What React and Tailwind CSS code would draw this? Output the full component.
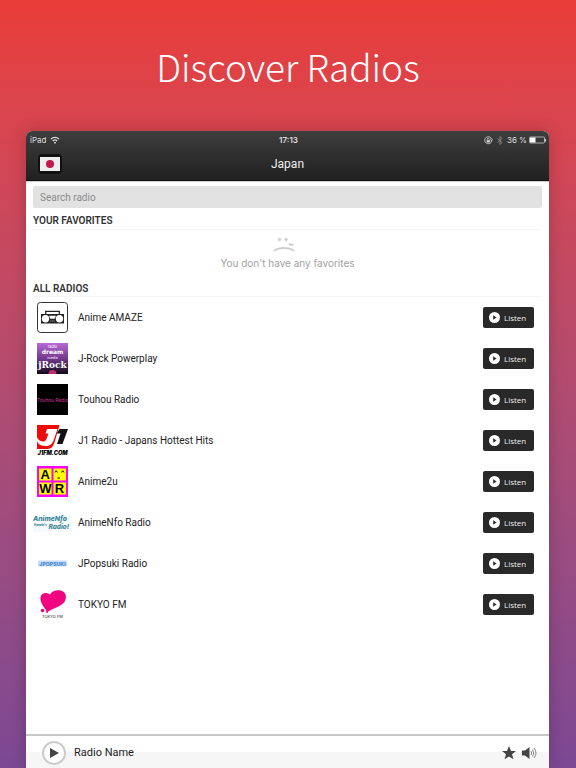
import React from "react";

function Boombox() {
  return (
    <svg viewBox="0 0 31 31" className="size-[31px]" aria-hidden="true">
      <rect x=".5" y=".5" width="30" height="30" rx="3" fill="#fff" stroke="#333" />
      <path d="M8.700 12.500V9.300h13.600v3.200" fill="none" stroke="#222" strokeWidth="1.300" />
      <path d="M4 12h23v9.500H4z" fill="#222" />
      <circle cx="8.500" cy="16.700" r="3.700" fill="#fff" />
      <circle cx="22.500" cy="16.700" r="3.700" fill="#fff" />
      <path d="M12 13.700h7l-1.300 3h-4.400z" fill="#fff" />
      <path d="M13 19h5" stroke="#777" />
    </svg>
  );
}

function JRock() {
  return (
    <svg viewBox="0 0 31 31" className="size-[31px]" aria-hidden="true">
      <defs>
        <linearGradient id="jrock" x2="0" y2="1">
          <stop offset="0" stopColor="#b768d6" />
          <stop offset=".5" stopColor="#74398e" />
          <stop offset="1" stopColor="#120a18" />
        </linearGradient>
      </defs>
      <rect width="31" height="31" fill="url(#jrock)" />
      <g textAnchor="middle" fill="#fff" fontFamily="Inter, sans-serif">
        <text x="15.5" y="4.500" fontSize="4">radio</text>
        <text x="15.5" y="10.500" fontSize="6" fontWeight="800" fontFamily="DejaVu Sans, sans-serif">dream</text>
        <text x="15.5" y="15.500" fontSize="3.600">media</text>
        <text x="15.5" y="25" fontSize="9" fontWeight="700" fontFamily="DejaVu Serif, serif">jRock</text>
      </g>
      <path d="M11.5 31a4 4 0 0 1 8 0z" fill="#c22b73" />
    </svg>
  );
}

function Touhou() {
  return (
    <svg viewBox="0 0 31 31" className="size-[31px]" aria-hidden="true">
      <rect width="31" height="31" fill="#000" />
      <text x="15.5" y="17.500" textAnchor="middle" fontSize="4.800" fill="#d83a9b" fontFamily="Inter, sans-serif">Touhou Radio</text>
    </svg>
  );
}

function J1() {
  return (
    <svg viewBox="0 0 31 31" className="size-[31px]" aria-hidden="true">
      <path d="M0 0h22.500l-5 17.500c-1.500 4.500-3.500 6.500-8 6.500H0z" fill="#f00b0b" />
      <path d="M10 4h10.500l-4 11.500c-1.500 4-4 5.500-8 5.500-4 0-7-1.500-8.500-4.500v-4c2 3 4 4 6 4 1.700 0 2.700-.8 3.300-2.300L11.500 8.500H8.500z" fill="#fff" />
      <path d="M22.500 4H31l-5.500 15h-5.500l3.500-10.500H19.500z" fill="#111" />
      <text x="15.5" y="30" textAnchor="middle" fontSize="5.600" fontWeight="900" fontStyle="italic" fontFamily="Inter, sans-serif">J1FM.COM</text>
    </svg>
  );
}

function Awr() {
  return (
    <svg viewBox="0 0 31 31" className="size-[31px]" aria-hidden="true">
      <rect width="31" height="31" fill="#f0f" />
      <path d="M2 2.500h12.500v12H2zM16.500 2.500H29v12H16.500zM2 16.500h12.500v12H2zM16.500 16.500H29v12H16.500z" fill="#ff0" />
      <g textAnchor="middle" fontSize="13" fontWeight="700" fontFamily="Liberation Sans, sans-serif">
        <text x="8.300" y="13">A</text>
        <text x="8.300" y="27">W</text>
        <text x="22.500" y="27">R</text>
      </g>
      <path d="M18 6.500l1.200-1.800 1.200 1.800M24.500 6.500l1.200-1.800L27 6.500M20.500 12h2.500" fill="none" stroke="#111" />
    </svg>
  );
}

function AnimeNfo() {
  return (
    <svg viewBox="0 0 39 18" className="h-[18px] w-[39px]" aria-hidden="true">
      <rect width="39" height="18" fill="#f7fafb" />
      <g fill="#3b8799" fontWeight="800" fontStyle="italic" fontFamily="Inter, sans-serif">
        <text x="0" y="7" fontSize="7">AnimeNfo</text>
        <text x="16" y="15.500" fontSize="6.600">Radio!</text>
        <text x="1" y="12" fontSize="3">Hanabi's</text>
      </g>
    </svg>
  );
}

function JPopsuki() {
  return (
    <svg viewBox="0 0 29 7" className="h-[7px] w-[29px]" aria-hidden="true">
      <rect y=".5" width="29" height="6" rx="1" fill="#c3dcf7" />
      <text x="14.500" y="5.500" textAnchor="middle" fontSize="5.200" fontWeight="800" fill="#4a86d6" fontFamily="Inter, sans-serif">JPOPSUKI</text>
    </svg>
  );
}

function TokyoFm() {
  return (
    <svg viewBox="0 0 31 31" className="size-[31px]" aria-hidden="true">
      <path d="M10.500 23C8 20 2.500 13 3.500 8c1-4 6-5.500 9.500-2.500C15.500 1 22 .2 26 2.500c4 2.500 3.500 8 1 11-4 4.500-11 5.500-16.500 9.500z" fill="#f0047f" />
      <circle cx="5.500" cy="21.500" r="1.800" fill="#f0047f" />
      <circle cx="10" cy="23" r="1" fill="#f0047f" />
      <text x="15.500" y="29" textAnchor="middle" fontSize="4" fill="#222" fontFamily="Inter, sans-serif">TOKYO FM</text>
    </svg>
  );
}

const radios = [
  ["Anime AMAZE", Boombox],
  ["J-Rock Powerplay", JRock],
  ["Touhou Radio", Touhou],
  ["J1 Radio - Japans Hottest Hits", J1],
  ["Anime2u", Awr],
  ["AnimeNfo Radio", AnimeNfo],
  ["JPopsuki Radio", JPopsuki],
  ["TOKYO FM", TokyoFm],
];

function StatusBar() {
  return (
    <div className="grid grid-cols-3 items-center pt-[3px] pr-0.5 pl-1 font-['Inter',sans-serif] text-[8px] leading-[12px] text-[#dedede]">
      <div className="flex items-center gap-1">
        <span>iPad</span>
        <svg viewBox="0 0 10 8" className="h-2 w-[10px]" aria-hidden="true">
          <path d="M1 3a5.800 5.800 0 0 1 8 0M2.800 5a3.200 3.200 0 0 1 4.400 0" fill="none" stroke="#ddd" strokeWidth="1.200" />
          <circle cx="5" cy="6.700" r=".9" fill="#ddd" />
        </svg>
      </div>
      <span className="text-center font-semibold">17:13</span>
      <div className="flex items-center justify-end gap-1">
        <svg viewBox="0 0 9 9" className="size-[9px]" fill="none" stroke="#ddd" aria-hidden="true">
          <path d="M7.700 5A3.500 3.500 0 1 1 7.700 3.500M6.300 3.700l1.500 1 1-1.500" strokeWidth=".8" />
          <path d="M3.300 4.300V3.200a1 1 0 0 1 2 0v1.100" strokeWidth=".7" />
          <rect x="2.700" y="4.200" width="3.200" height="2.200" fill="#ddd" stroke="none" />
        </svg>
        <svg viewBox="0 0 6 9" className="h-[9px] w-[6px]" fill="none" stroke="#888" strokeWidth=".9" aria-hidden="true">
          <path d="M.5 2.500l4.500 4-2 2V.500l2 2-4.500 4" />
        </svg>
        <span>36 %</span>
        <svg viewBox="0 0 18 8" className="-ml-0.5 h-2 w-[18px]" aria-hidden="true">
          <rect x=".5" y="1" width="15" height="6" rx=".8" fill="none" stroke="#bbb" strokeWidth=".9" />
          <rect x="1" y="1.500" width="5.500" height="5" fill="#fff" />
          <path d="M16.500 3v2.500" stroke="#ddd" />
        </svg>
      </div>
    </div>
  );
}

export default function App() {
  return (
    <div className="flex min-h-screen flex-col bg-linear-to-b from-[#ea3d38] to-[#7c4894] font-['Roboto',sans-serif]">
      <h1 className="pt-9 pb-[35px] text-center font-['Noto_Sans_CJK_SC',sans-serif] text-[37px] leading-[60px] font-light text-white">
        Discover Radios
      </h1>
      <main className="mr-[27px] ml-[26px] flex flex-1 flex-col overflow-hidden rounded-t-md bg-white shadow-[0_0_16px_rgba(0,0,0,0.2)]">
        <header className="h-[50px] border-b border-[#111] bg-linear-to-b from-[#3e3e3e] to-[#212121]">
          <StatusBar />
          <div className="grid grid-cols-3 items-center px-3 pt-2">
            <button aria-label="Country: Japan" className="flex h-5 w-6 items-center justify-center rounded-sm bg-[#111]">
              <svg viewBox="0 0 20 14" className="h-[14px] w-5" aria-hidden="true">
                <rect width="20" height="14" fill="#eee" />
                <circle cx="10" cy="7" r="4" fill="#c3194b" />
              </svg>
            </button>
            <h2 className="text-center text-xs text-[#eee]">Japan</h2>
          </div>
        </header>
        <div className="flex-1 border-t border-[#ccc] px-[7px] pt-1">
          <input aria-label="Search radio" placeholder="Search radio" className="block h-[22px] w-full rounded-xs bg-[#e2e2e2] px-[7px] text-[10px] text-[#555] placeholder:text-[#8b8b8b]" />
          <section>
            <h3 className="border-b border-[#f5f5f5] pt-[7px] pb-0.5 text-[10px] leading-[12px] font-semibold text-[#333]">YOUR FAVORITES</h3>
            <div className="flex flex-col items-center pt-[7px] pb-[13px] font-['Inter',sans-serif] text-[10px] leading-[14px] text-[#a2a2a2]">
              <svg viewBox="0 0 22 16" className="mr-2 h-4 w-[22px]" fill="none" stroke="#cfcfcf" strokeWidth="2" strokeLinecap="round" aria-hidden="true">
                <circle cx="6.500" cy="2.500" r="1.200" fill="#ccc" strokeWidth="1" />
                <circle cx="13" cy="2.500" r="1.200" fill="#ccc" strokeWidth="1" />
                <path d="M1.500 13.500c5-3.500 14-3.500 19 0M16.500 7q1.500 1.500 3.200.5" />
              </svg>
              <p className="pt-[3px]">You don't have any favorites</p>
            </div>
          </section>
          <section>
            <h3 className="border-b border-[#f5f5f5] pb-px text-[10px] leading-[12px] font-semibold text-[#333]">ALL RADIOS</h3>
            <ul>
              {radios.map(([name, Logo]) => (
                <li key={name} className="flex h-[41px] items-center pr-2">
                  <div className="flex w-[38px] shrink-0 justify-center"><Logo /></div>
                  <span className="flex-1 pl-[7px] text-[10px] text-[#222]">{name}</span>
                  <button className="flex h-[21px] w-[51px] items-center gap-1 rounded-xs bg-[#292929] pl-1.5 font-['Open_Sans',sans-serif] text-[8px] font-medium text-[#eee]">
                    <svg viewBox="0 0 11 11" className="size-[11px]" aria-hidden="true">
                      <circle cx="5.500" cy="5.500" r="5.500" fill="#fff" />
                      <path d="M4.200 3.200l3.300 2.300-3.300 2.300z" fill="#292929" />
                    </svg>
                    Listen
                  </button>
                </li>
              ))}
            </ul>
          </section>
        </div>
        <footer className="flex h-[34px] items-center border-t-2 border-[#c8c8c8] bg-linear-to-b from-white from-50% to-[#f6f6f6] to-50% pt-0.5 pr-3 pl-4">
          <button aria-label="Play" className="flex size-6 items-center justify-center rounded-full border-2 border-[#ccc] bg-white">
            <svg viewBox="0 0 10 10" className="size-[10px]" aria-hidden="true"><path d="M1 0l9 5-9 5z" fill="#444" /></svg>
          </button>
          <span className="flex-1 pl-2 text-[11px] text-[#222]">Radio Name</span>
          <button aria-label="Favorite">
            <svg viewBox="0 0 14 14" className="size-[14px]" aria-hidden="true"><path d="M7 0l2 5h5l-4 3.300 1.500 5L7 10.500l-4.500 2.800 1.500-5L0 5h5z" fill="#444" /></svg>
          </button>
          <button aria-label="Volume" className="ml-1.5">
            <svg viewBox="0 0 15 14" className="h-[14px] w-[15px]" fill="none" stroke="#777" strokeWidth=".9" aria-hidden="true">
              <path d="M0 4.500h3L7.500 1v12L3 9.500H0z" fill="#444" stroke="none" />
              <path d="M9 5q1.300 2 0 4M10.500 3.500q2.500 3.500 0 7M12 2q4 5 0 10" />
            </svg>
          </button>
        </footer>
      </main>
    </div>
  );
}
